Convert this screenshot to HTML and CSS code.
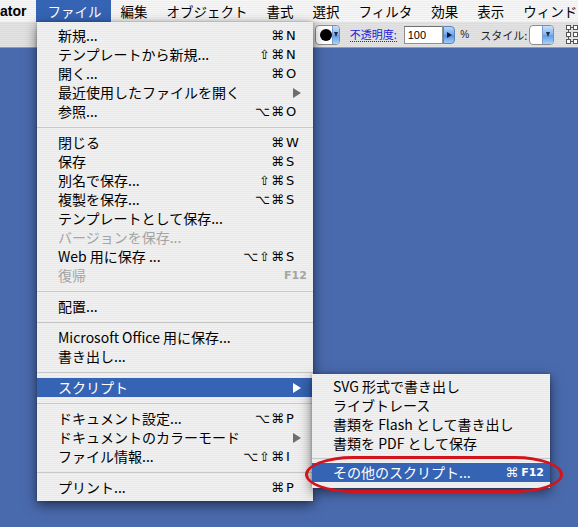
FILE: index.html
```html
<!DOCTYPE html>
<html lang="ja">
<head>
<meta charset="utf-8">
<title>Illustrator ファイルメニュー</title>
<link rel="stylesheet" href="styles.css">
</head>
<body>
<div class="screen">
  <div class="menubar">
    <span class="mb app">ator</span>
    <span class="mb active">ファイル</span>
    <span class="mb">編集</span>
    <span class="mb">オブジェクト</span>
    <span class="mb">書式</span>
    <span class="mb">選択</span>
    <span class="mb">フィルタ</span>
    <span class="mb">効果</span>
    <span class="mb">表示</span>
    <span class="mb">ウィンドウ</span>
  </div>
  <div class="toolbar">
    <span class="popup dotpop"><span class="pv"><span class="dot"></span></span><span class="pa"><span class="down"></span></span></span>
    <span class="link">不透明度:</span>
    <span class="field">100</span>
    <span class="stepbtn"><span class="right"></span></span>
    <span class="pct">%</span>
    <span class="tlabel">スタイル:</span>
    <span class="popup stylepop"><span class="pv"></span><span class="pa"><span class="down"></span></span></span>
    <svg class="gridicon" width="12" height="20" viewBox="0 0 12 20">
      <g fill="#fff" stroke="#555" stroke-width="1">
        <rect x="0.5" y="0.5" width="4" height="4"/>
        <rect x="0.5" y="7.5" width="4" height="4"/>
        <rect x="0.5" y="14.5" width="4" height="4"/>
        <rect x="7.5" y="0.5" width="4" height="4"/>
        <rect x="7.5" y="7.5" width="4" height="4"/>
        <rect x="7.5" y="14.5" width="4" height="4"/>
      </g>
      <path d="M2.5 4.5v3M2.5 11.5v3M4.5 2.5h3M4.5 16.5h3" stroke="#555" stroke-width="1" fill="none"/>
    </svg>
  </div>
  <div class="desktop"></div>

  <div class="menu main">
    <div class="item"><span class="label">新規...</span><span class="sc"><span class="mods">⌘</span><span class="key">N</span></span></div>
    <div class="item"><span class="label">テンプレートから新規...</span><span class="sc"><span class="mods">⇧⌘</span><span class="key">N</span></span></div>
    <div class="item"><span class="label">開く...</span><span class="sc"><span class="mods">⌘</span><span class="key">O</span></span></div>
    <div class="item"><span class="label">最近使用したファイルを開く</span><span class="arrow"></span></div>
    <div class="item"><span class="label">参照...</span><span class="sc"><span class="mods">⌥⌘</span><span class="key">O</span></span></div>
    <div class="sep"></div>
    <div class="item"><span class="label">閉じる</span><span class="sc"><span class="mods">⌘</span><span class="key">W</span></span></div>
    <div class="item"><span class="label">保存</span><span class="sc"><span class="mods">⌘</span><span class="key">S</span></span></div>
    <div class="item"><span class="label">別名で保存...</span><span class="sc"><span class="mods">⇧⌘</span><span class="key">S</span></span></div>
    <div class="item"><span class="label">複製を保存...</span><span class="sc"><span class="mods">⌥⌘</span><span class="key">S</span></span></div>
    <div class="item"><span class="label">テンプレートとして保存...</span></div>
    <div class="item disabled"><span class="label">バージョンを保存...</span></div>
    <div class="item"><span class="label">Web 用に保存 ...</span><span class="sc"><span class="mods">⌥⇧⌘</span><span class="key">S</span></span></div>
    <div class="item disabled"><span class="label">復帰</span><span class="sc"><span class="key fkey">F12</span></span></div>
    <div class="sep"></div>
    <div class="item"><span class="label">配置...</span></div>
    <div class="sep"></div>
    <div class="item"><span class="label">Microsoft Office 用に保存...</span></div>
    <div class="item"><span class="label">書き出し...</span></div>
    <div class="sep"></div>
    <div class="item hl"><span class="label">スクリプト</span><span class="arrow"></span></div>
    <div class="sep"></div>
    <div class="item"><span class="label">ドキュメント設定...</span><span class="sc"><span class="mods">⌥⌘</span><span class="key">P</span></span></div>
    <div class="item"><span class="label">ドキュメントのカラーモード</span><span class="arrow"></span></div>
    <div class="item"><span class="label">ファイル情報...</span><span class="sc"><span class="mods">⌥⇧⌘</span><span class="key">I</span></span></div>
    <div class="sep"></div>
    <div class="item"><span class="label">プリント...</span><span class="sc"><span class="mods">⌘</span><span class="key">P</span></span></div>
  </div>

  <div class="menu sub">
    <div class="item"><span class="label">SVG 形式で書き出し</span></div>
    <div class="item"><span class="label">ライブトレース</span></div>
    <div class="item"><span class="label">書類を Flash として書き出し</span></div>
    <div class="item"><span class="label">書類を PDF として保存</span></div>
    <div class="sep"></div>
    <div class="item hl"><span class="label">その他のスクリプト...</span><span class="sc"><span class="mods">⌘</span><span class="key fkey">F12</span></span></div>
  </div>

  <div class="ring"></div>
</div>
</body>
</html>
```
FILE: styles.css
```css
html, body {
  margin: 0;
  padding: 0;
}
body {
  font-family: "Noto Sans CJK JP", "Noto Sans", sans-serif;
  background: #4a6aae;
}
.screen {
  position: relative;
  width: 578px;
  height: 527px;
  overflow: hidden;
  display: flex;
  flex-direction: column;
}

/* menu bar */
.menubar {
  height: 22px;
  flex: none;
  display: flex;
  align-items: stretch;
  white-space: nowrap;
  background: repeating-linear-gradient(to bottom, #f7f7f7 0, #f7f7f7 1px, #ededed 1px, #ededed 2px);
  font-size: 13.5px;
  color: #000;
}
.mb {
  display: flex;
  align-items: center;
  padding: 0 9.5px;
  line-height: 22px;
}
.mb.app {
  font-family: "Liberation Sans", Arial, sans-serif;
  font-weight: bold;
  font-size: 14px;
  padding: 0 10px 0 0;
}
.mb.active {
  background: #3564b4;
  color: #fff;
  padding: 0 9.5px 0 11px;
}

/* toolbar */
.toolbar {
  height: 26px;
  flex: none;
  display: flex;
  align-items: center;
  padding-left: 315px;
  white-space: nowrap;
  background: repeating-linear-gradient(to bottom, #e3e3e3 0, #e3e3e3 1px, #dbdbdb 1px, #dbdbdb 2px);
  box-sizing: border-box;
  border-bottom: 1px solid #9a9a9a;
}
.popup {
  display: flex;
  height: 20px;
  box-sizing: border-box;
  border: 1px solid #8c8c8c;
  border-radius: 4px;
  overflow: hidden;
  background: #fff;
}
.dotpop { width: 30px; }
.stylepop { width: 30px; margin-left: 2px; }
.pv {
  flex: 1;
  display: flex;
  align-items: center;
  padding-left: 4px;
}
.dot {
  width: 12px;
  height: 12px;
  border-radius: 50%;
  background: #000;
}
.pa {
  width: 10px;
  display: flex;
  align-items: center;
  justify-content: center;
  border-left: 1px solid #7a9ccc;
  background: linear-gradient(to bottom, #c7dffa 0%, #7fb3ee 50%, #5d9de8 51%, #a9d2fb 100%);
}
.down {
  width: 0;
  height: 0;
  border-top: 5px solid #1c2a44;
  border-left: 2.5px solid transparent;
  border-right: 2.5px solid transparent;
}
.link {
  margin-left: 10px;
  font-size: 11px;
  color: #2222d6;
  line-height: 13px;
  border-bottom: 1px dotted #2222d6;
}
.field {
  margin-left: 7px;
  width: 47px;
  height: 18px;
  box-sizing: border-box;
  border: 1px solid #8f8f8f;
  border-top-color: #6f6f6f;
  background: #fff;
  font-family: "Liberation Sans", Arial, sans-serif;
  font-size: 11px;
  line-height: 16px;
  padding-left: 3px;
  color: #000;
}
.stepbtn {
  width: 15px;
  height: 18px;
  box-sizing: border-box;
  border: 1px solid #5d83bd;
  border-radius: 0 4px 4px 0;
  display: flex;
  align-items: center;
  justify-content: center;
  background: linear-gradient(to bottom, #b7d6f8 0%, #6aa5ec 50%, #4f90e3 51%, #a3cdf9 100%);
}
.right {
  width: 0;
  height: 0;
  border-left: 5px solid #0d1a30;
  border-top: 3px solid transparent;
  border-bottom: 3px solid transparent;
}
.pct {
  margin-left: 5px;
  font-family: "Liberation Sans", Arial, sans-serif;
  font-size: 10px;
  color: #222;
}
.tlabel {
  margin-left: 11px;
  font-size: 11px;
  color: #222;
}
.gridicon {
  margin-left: 12px;
  flex: none;
}

.desktop {
  flex: 1;
  background: #4a6aae;
}

/* menus */
.menu {
  position: absolute;
  box-sizing: border-box;
  background: repeating-linear-gradient(to bottom, #f1f1f1 0, #f1f1f1 1px, #e9e9e9 1px, #e9e9e9 2px);
  box-shadow: 0 4px 12px rgba(0, 0, 0, 0.55), 0 0 3px rgba(0, 0, 0, 0.25);
  font-size: 14px;
  color: #000;
}
.menu.main {
  left: 37px;
  top: 22px;
  width: 276px;
  padding: 4px 0 4px;
}
.menu.sub {
  left: 312px;
  top: 374px;
  width: 238px;
  padding: 3px 0 6px;
}
.item {
  height: 19px;
  display: flex;
  align-items: center;
  padding: 0 10px 0 21px;
  white-space: nowrap;
  line-height: 19px;
}
.sub .item {
  padding-right: 6px;
}
.label {
  flex: 1;
}
.sc {
  display: flex;
  align-items: center;
  font-family: "DejaVu Sans", sans-serif;
  font-size: 13px;
}
.mods {
  text-align: right;
  letter-spacing: 1px;
}
.sub .mods {
  letter-spacing: 0;
}
.key {
  width: 18px;
  padding-left: 1px;
  box-sizing: border-box;
}
.key.fkey {
  font-size: 11px;
  font-weight: bold;
  padding-left: 2px;
  width: 21px;
}
.sub .key.fkey {
  width: auto;
  padding-left: 3px;
}
.arrow {
  width: 0;
  height: 0;
  margin-right: 2px;
  border-left: 8px solid #6e6e6e;
  border-top: 5px solid transparent;
  border-bottom: 5px solid transparent;
}
.item.disabled {
  color: #a4a4a4;
}
.item.hl {
  background: #3564b4;
  color: #fff;
}
.item.hl .arrow {
  border-left-color: #fff;
}
.sep {
  height: 12px;
  display: flex;
  align-items: center;
}
.sep::before {
  content: "";
  flex: 1;
  height: 1px;
  background: #c8c8c8;
}
.sub .sep {
  height: 10px;
}

/* annotation ring */
.ring {
  position: absolute;
  left: 305px;
  top: 456px;
  width: 258px;
  height: 37px;
  box-sizing: border-box;
  border: 3px solid #d3141c;
  border-radius: 48px / 50%;
}
```
